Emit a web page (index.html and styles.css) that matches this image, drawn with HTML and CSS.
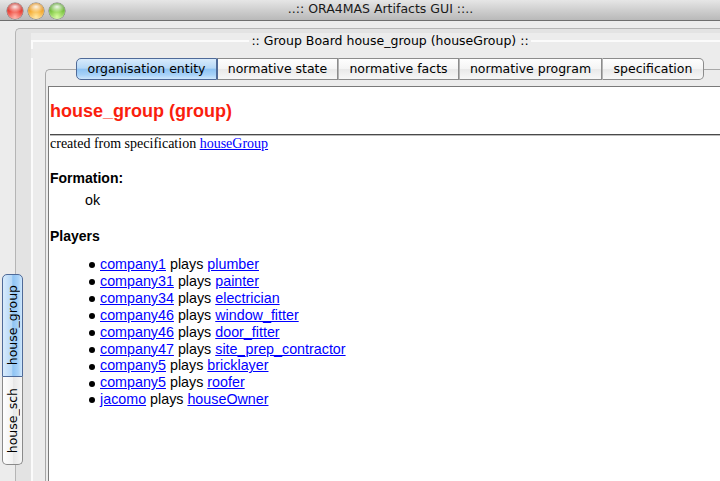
FILE: index.html
```html
<!DOCTYPE html>
<html>
<head>
<meta charset="utf-8">
<title>ORA4MAS Artifacts GUI</title>
<link rel="stylesheet" href="styles.css">
</head>
<body>
<div class="window">
  <div class="titlebar">
    <div class="lights">
      <span class="light red"></span>
      <span class="light orange"></span>
      <span class="light green"></span>
    </div>
    <div class="title">..:: ORA4MAS Artifacts GUI ::..</div>
  </div>
  <div class="main">
    <div class="sidetabs">
      <div class="stab selected"><span>house_group</span></div>
      <div class="stab"><span>house_sch</span></div>
    </div>
    <div class="outer">
      <div class="board">
        <div class="legend"><span>:: Group Board house_group (houseGroup) ::</span></div>
        <div class="board-body">
          <div class="tabs">
            <div class="tab selected t1">organisation entity</div>
            <div class="tab t2">normative state</div>
            <div class="tab t3">normative facts</div>
            <div class="tab t4">normative program</div>
            <div class="tab t5">specification</div>
          </div>
          <div class="pane">
            <div class="content">
              <h1 class="group-title">house_group (group)</h1>
              <hr class="rule">
              <p class="origin">created from specification <a href="#">houseGroup</a></p>
              <h2 class="section formation">Formation:</h2>
              <p class="status">ok</p>
              <h2 class="section players">Players</h2>
              <ul class="players-list">
                <li><a href="#">company1</a> plays <a href="#">plumber</a></li>
                <li><a href="#">company31</a> plays <a href="#">painter</a></li>
                <li><a href="#">company34</a> plays <a href="#">electrician</a></li>
                <li><a href="#">company46</a> plays <a href="#">window_fitter</a></li>
                <li><a href="#">company46</a> plays <a href="#">door_fitter</a></li>
                <li><a href="#">company47</a> plays <a href="#">site_prep_contractor</a></li>
                <li><a href="#">company5</a> plays <a href="#">bricklayer</a></li>
                <li><a href="#">company5</a> plays <a href="#">roofer</a></li>
                <li><a href="#">jacomo</a> plays <a href="#">houseOwner</a></li>
              </ul>
            </div>
          </div>
        </div>
      </div>
    </div>
  </div>
</div>
</body>
</html>
```

FILE: styles.css
```css
html, body {
  margin: 0;
  padding: 0;
}
body {
  width: 720px;
  height: 481px;
  overflow: hidden;
  background: #ececec;
  font-family: "DejaVu Sans", sans-serif;
  font-size: 12.5px;
  color: #000;
}
.window {
  width: 720px;
  height: 481px;
  overflow: hidden;
}

/* title bar */
.titlebar {
  height: 20px;
  border-bottom: 1px solid #6e6e6e;
  background: linear-gradient(#e6e6e6, #cfcfcf 50%, #b9b9b9);
  display: flex;
  align-items: flex-start;
}
.lights {
  display: flex;
  gap: 5px;
  margin: 3px 0 0 7px;
}
.light {
  width: 16px;
  height: 16px;
  border-radius: 50%;
  box-sizing: border-box;
  box-shadow: 0 0 0 0.5px rgba(0,0,0,0.45), inset 0 -1px 2px rgba(255,255,255,0.35);
}
.light.red {
  background:
    radial-gradient(ellipse 55% 35% at 50% 24%, rgba(255,255,255,0.9), rgba(255,255,255,0) 100%),
    radial-gradient(circle at 50% 85%, #ffb0a4 0%, #ee4b40 45%, #c0231a 80%, #9c150e 100%);
}
.light.orange {
  background:
    radial-gradient(ellipse 55% 35% at 50% 24%, rgba(255,255,255,0.9), rgba(255,255,255,0) 100%),
    radial-gradient(circle at 50% 85%, #ffe7a0 0%, #f6b03a 45%, #d9850d 80%, #b66806 100%);
}
.light.green {
  background:
    radial-gradient(ellipse 55% 35% at 50% 24%, rgba(255,255,255,0.9), rgba(255,255,255,0) 100%),
    radial-gradient(circle at 50% 85%, #d7fb9e 0%, #86cc4a 45%, #4f9a22 80%, #3a7812 100%);
}
.title {
  flex: 1;
  text-align: center;
  line-height: 20px;
  padding-right: 24px;
  margin-top: -1px;
  color: #1a1a1a;
}

/* main area */
.main {
  display: flex;
  align-items: flex-start;
}
.sidetabs {
  display: flex;
  flex-direction: column;
  margin: 253px 0 0 2px;
  position: relative;
  z-index: 1;
}
.stab {
  writing-mode: vertical-rl;
  width: 21px;
  box-sizing: border-box;
  border: 1px solid #8a8a8a;
  border-top: none;
  background: linear-gradient(to right, #fefefe, #f2f2f2 50%, #e6e6e6 52%, #f6f6f6);
  text-align: center;
  line-height: 19px;
  height: 88px;
}
.stab:first-child {
  border-top: 1px solid #8a8a8a;
  border-radius: 5px 5px 0 0;
}
.stab:last-child {
  border-radius: 0 0 5px 5px;
}
.stab.selected {
  height: 103px;
  border-color: #4f6a98;
  background: linear-gradient(to right, #d8ebfc, #b6d8f7 45%, #8fc3f3 52%, #a8d2f8 80%, #cfe7fd);
}
.stab span {
  display: inline-block;
  transform: rotate(180deg);
}

.outer {
  margin: 7px 0 0 -8px;
  border-top: 1px solid #b5b5b5;
  border-left: 1px solid #b5b5b5;
  border-top-left-radius: 5px;
  background: #e3e3e3;
  padding: 4px 0 0 15px;
  height: 470px;
}
.board {
  width: 716px;
  height: 470px;
  background: #ececec;
}
.legend {
  display: flex;
  align-items: center;
  height: 16px;
  line-height: 16px;
}
.legend::before,
.legend::after {
  content: "";
  flex: 1;
  align-self: flex-end;
  height: 9px;
  box-sizing: border-box;
  border-top: 2px solid #fbfbfb;
}
.legend::before {
  border-left: 2px solid #fbfbfb;
}
.legend span {
  padding: 0 2px;
  white-space: nowrap;
}
.board-body {
  border-left: 2px solid #fbfbfb;
  padding-left: 12px;
  height: 460px;
}

/* top tabs */
.tabs {
  display: flex;
  margin: 9px 0 0 31px;
  position: relative;
  z-index: 1;
}
.tab {
  height: 22px;
  box-sizing: border-box;
  border: 1px solid #8c8c8c;
  border-left: 1px solid #b4b4b4;
  background: linear-gradient(#fefefe, #f4f4f4 50%, #e9e9e9 52%, #f7f7f7);
  line-height: 20px;
  text-align: center;
  white-space: nowrap;
}
.tab.t1 { width: 141px; border-left-color: #4f6a98; border-radius: 5px 0 0 5px; }
.tab.t2 { width: 121px; border-left-color: #4f6a98; }
.tab.t3 { width: 121px; }
.tab.t4 { width: 143px; }
.tab.t5 { width: 102px; border-right: 1px solid #8c8c8c; border-radius: 0 5px 5px 0; }
.tab.selected {
  border-color: #4f6a98;
  background: linear-gradient(#d8ebfc, #b6d8f7 45%, #8fc3f3 52%, #a8d2f8 80%, #cfe7fd);
}

.pane {
  margin-top: -11px;
  border-top: 1px solid #a8a8a8;
  border-left: 1px solid #a8a8a8;
  border-top-left-radius: 5px;
  padding: 16px 0 0 2px;
  height: 420px;
}
.content {
  border-top: 1px solid #7a7a7a;
  border-left: 1px solid #7a7a7a;
  background: #fff;
  padding: 13px 0 0 1px;
  height: 420px;
  font-family: "Liberation Sans", Arial, sans-serif;
  font-size: 14px;
}
.content a {
  color: #0000ff;
  text-decoration: underline;
}
.group-title {
  margin: 0;
  font-size: 18px;
  line-height: 22px;
  font-weight: bold;
  color: #fa1e0e;
}
.rule {
  margin: 12px 0 0;
  height: 0;
  border: 0;
  border-top: 1px solid #4a4a4a;
  border-bottom: 1px solid #bdbdbd;
}
.origin {
  margin: 0;
  font-family: "Liberation Serif", "Times New Roman", serif;
  font-size: 14px;
  line-height: 16px;
}
.section {
  margin: 0;
  font-size: 14px;
  line-height: 17px;
  font-weight: bold;
}
.formation { margin-top: 18px; }
.players { margin-top: 19px; }
.status {
  margin: 5px 0 0 35px;
  line-height: 17px;
  font-size: 14.3px;
}
.players-list {
  margin: 11px 0 0;
  padding: 0 0 0 50px;
  list-style: none;
  line-height: 16.9px;
  font-size: 14.3px;
}
.players-list li::before {
  content: "";
  display: inline-block;
  width: 6px;
  height: 6px;
  border-radius: 50%;
  background: #000;
  margin-left: -11px;
  margin-right: 5px;
  vertical-align: middle;
}
```
